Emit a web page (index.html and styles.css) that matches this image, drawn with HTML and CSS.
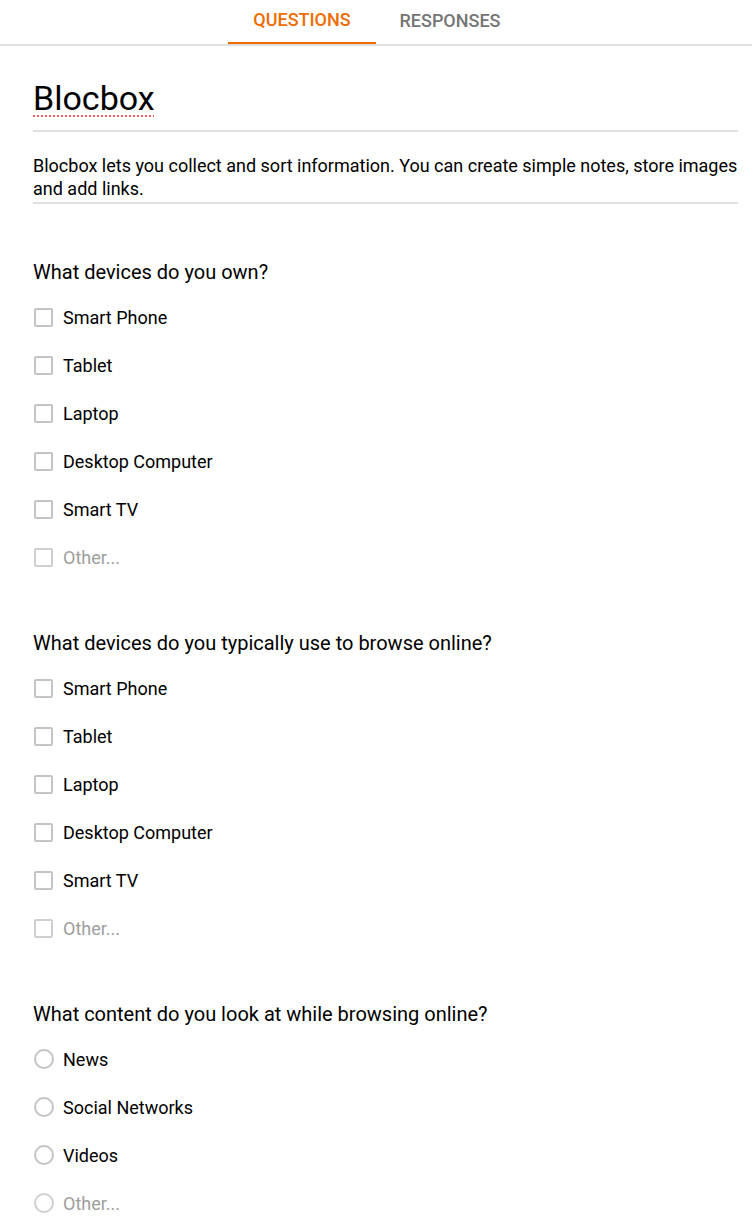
FILE: index.html
```html
<!DOCTYPE html>
<html>
<head>
<meta charset="utf-8">
<link rel="stylesheet" href="styles.css">
</head>
<body>
<nav class="tabs">
  <div class="tab active">QUESTIONS</div>
  <div class="tab">RESPONSES</div>
</nav>
<main class="form">
  <header class="form-head">
    <h1 class="form-title"><span class="misspelled">Blocbox</span></h1>
    <p class="form-desc">Blocbox lets you collect and sort information. You can create simple notes, store images and add links.</p>
  </header>

  <section class="question">
    <h2 class="q-title">What devices do you own?</h2>
    <ul class="options">
      <li class="option"><span class="box"></span>Smart Phone</li>
      <li class="option"><span class="box"></span>Tablet</li>
      <li class="option"><span class="box"></span>Laptop</li>
      <li class="option"><span class="box"></span>Desktop Computer</li>
      <li class="option"><span class="box"></span>Smart TV</li>
      <li class="option other"><span class="box"></span>Other...</li>
    </ul>
  </section>

  <section class="question">
    <h2 class="q-title">What devices do you typically use to browse online?</h2>
    <ul class="options">
      <li class="option"><span class="box"></span>Smart Phone</li>
      <li class="option"><span class="box"></span>Tablet</li>
      <li class="option"><span class="box"></span>Laptop</li>
      <li class="option"><span class="box"></span>Desktop Computer</li>
      <li class="option"><span class="box"></span>Smart TV</li>
      <li class="option other"><span class="box"></span>Other...</li>
    </ul>
  </section>

  <section class="question">
    <h2 class="q-title">What content do you look at while browsing online?</h2>
    <ul class="options">
      <li class="option"><span class="box radio"></span>News</li>
      <li class="option"><span class="box radio"></span>Social Networks</li>
      <li class="option"><span class="box radio"></span>Videos</li>
      <li class="option other"><span class="box radio"></span>Other...</li>
    </ul>
  </section>
</main>
</body>
</html>
```

FILE: styles.css
```css
* { box-sizing: border-box; }
html, body { margin: 0; padding: 0; background: #fff; }
body {
  font-family: Roboto, "Liberation Sans", sans-serif;
  color: #000;
}
.tabs {
  display: flex;
  justify-content: center;
  height: 46px;
  border-bottom: 2px solid #e0e0e0;
}
.tab {
  width: 148px;
  height: 44px;
  display: flex;
  align-items: center;
  justify-content: center;
  font-size: 18px;
  font-weight: 500;
  color: #757575;
  padding-bottom: 4px;
}
.tab.active {
  color: #ef6c00;
  border-bottom: 2px solid #ef6c00;
}
.form {
  padding: 0 14px 0 33px;
}
.form-head { margin-top: 32px; }
.form-title {
  margin: 0;
  font-size: 34px;
  font-weight: 400;
  line-height: 40px;
  padding-bottom: 12px;
  border-bottom: 2px solid #e0e0e0;
}
.misspelled {
  text-decoration: underline dotted #f06060;
  text-decoration-thickness: 2px;
  text-underline-offset: 5px;
}
.form-desc {
  margin: 0;
  padding-top: 22px;
  font-size: 18px;
  line-height: 23px;
  padding-bottom: 2px;
  border-bottom: 2px solid #e0e0e0;
}
.question { margin-top: 56px; }
.question + .question { margin-top: 50px; }
.q-title {
  margin: 0 0 9px;
  font-size: 20px;
  font-weight: 400;
  line-height: 24px;
}
.options { list-style: none; margin: 0; padding: 0; }
.option {
  height: 48px;
  display: flex;
  align-items: center;
  font-size: 18px;
}
.box {
  width: 19px;
  height: 19px;
  margin-left: 1px;
  margin-right: 10px;
  border: 2px solid #c4c4c4;
  border-radius: 2px;
  flex: none;
}
.box.radio {
  width: 20px;
  height: 20px;
  margin-right: 9px;
  border-radius: 50%;
}
.other { color: #9e9e9e; }
.other .box { border-color: #cfcfcf; }
```
